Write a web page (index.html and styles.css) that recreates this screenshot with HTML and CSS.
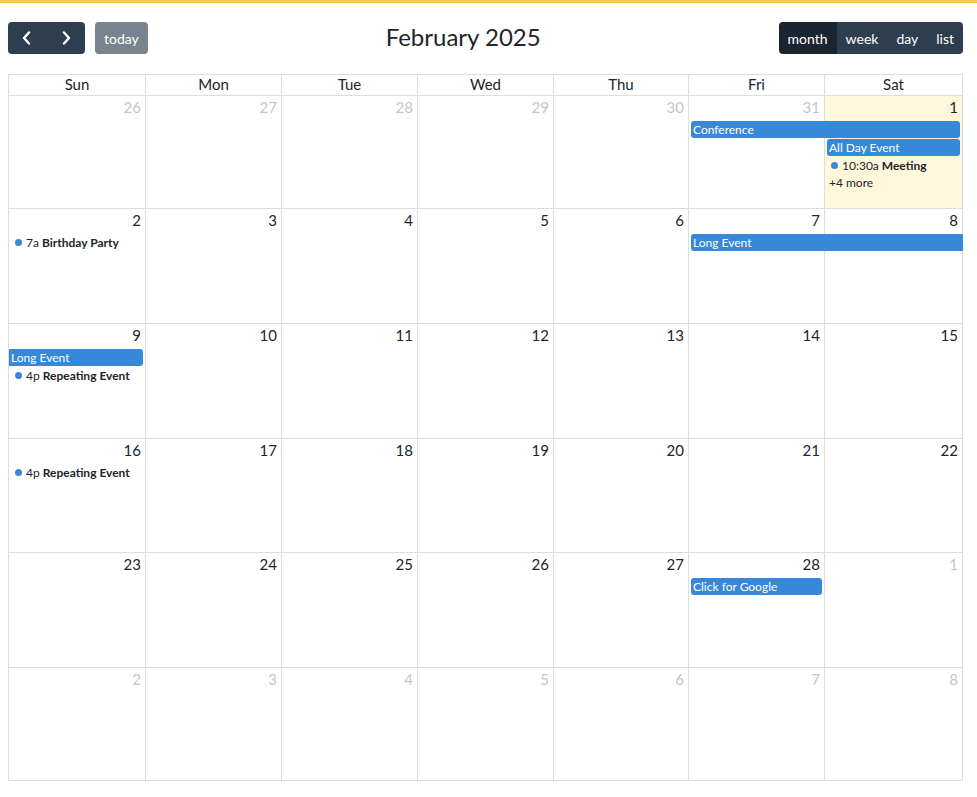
FILE: index.html
```html
<!DOCTYPE html>
<html lang="en">

<head>
	<meta charset="UTF-8">
	<title>Calendar - February 2025</title>

	<link rel="stylesheet" href="styles.css">
</head>

<body>
	<div class="topbar"></div>

	<div class="calendar">
		<div class="toolbar">
			<div class="toolbar-left">
				<div class="btn-group">
					<button class="btn btn-nav" title="Previous month">
						<svg width="14" height="14" viewBox="0 0 14 14"><polyline points="9,1.5 4,7 9,12.5" /></svg>
					</button>
					<button class="btn btn-nav" title="Next month">
						<svg width="14" height="14" viewBox="0 0 14 14"><polyline points="5,1.5 10,7 5,12.5" /></svg>
					</button>
				</div>
				<button class="btn btn-today">today</button>
			</div>
			<h2 class="title">February 2025</h2>
			<div class="btn-group">
				<button class="btn active">month</button>
				<button class="btn">week</button>
				<button class="btn">day</button>
				<button class="btn">list</button>
			</div>
		</div>

		<div class="month">
			<div class="dow-row">
				<div class="dow">Sun</div>
				<div class="dow">Mon</div>
				<div class="dow">Tue</div>
				<div class="dow">Wed</div>
				<div class="dow">Thu</div>
				<div class="dow">Fri</div>
				<div class="dow">Sat</div>
			</div>

			<div class="weeks">
				<!-- semana 1 -->
				<div class="week">
					<div class="day other"><span class="num">26</span></div>
					<div class="day other"><span class="num">27</span></div>
					<div class="day other"><span class="num">28</span></div>
					<div class="day other"><span class="num">29</span></div>
					<div class="day other"><span class="num">30</span></div>
					<div class="day other"><span class="num">31</span></div>
					<div class="day today"><span class="num">1</span></div>

					<div class="ev-bar at-fri span-2 line-1">Conference</div>
					<div class="ev-bar at-sat line-2">All Day Event</div>
					<div class="ev-dot at-sat line-3"><i class="dot"></i><span class="time">10:30a</span><b>Meeting</b></div>
					<div class="more at-sat line-4">+4 more</div>
				</div>

				<!-- semana 2 -->
				<div class="week">
					<div class="day"><span class="num">2</span></div>
					<div class="day"><span class="num">3</span></div>
					<div class="day"><span class="num">4</span></div>
					<div class="day"><span class="num">5</span></div>
					<div class="day"><span class="num">6</span></div>
					<div class="day"><span class="num">7</span></div>
					<div class="day"><span class="num">8</span></div>

					<div class="ev-dot at-sun line-1"><i class="dot"></i><span class="time">7a</span><b>Birthday Party</b></div>
					<div class="ev-bar at-fri span-2 line-1 cont-right">Long Event</div>
				</div>

				<!-- semana 3 -->
				<div class="week">
					<div class="day"><span class="num">9</span></div>
					<div class="day"><span class="num">10</span></div>
					<div class="day"><span class="num">11</span></div>
					<div class="day"><span class="num">12</span></div>
					<div class="day"><span class="num">13</span></div>
					<div class="day"><span class="num">14</span></div>
					<div class="day"><span class="num">15</span></div>

					<div class="ev-bar at-sun line-1 cont-left">Long Event</div>
					<div class="ev-dot at-sun line-2"><i class="dot"></i><span class="time">4p</span><b>Repeating Event</b></div>
				</div>

				<!-- semana 4 -->
				<div class="week">
					<div class="day"><span class="num">16</span></div>
					<div class="day"><span class="num">17</span></div>
					<div class="day"><span class="num">18</span></div>
					<div class="day"><span class="num">19</span></div>
					<div class="day"><span class="num">20</span></div>
					<div class="day"><span class="num">21</span></div>
					<div class="day"><span class="num">22</span></div>

					<div class="ev-dot at-sun line-1"><i class="dot"></i><span class="time">4p</span><b>Repeating Event</b></div>
				</div>

				<!-- semana 5 -->
				<div class="week">
					<div class="day"><span class="num">23</span></div>
					<div class="day"><span class="num">24</span></div>
					<div class="day"><span class="num">25</span></div>
					<div class="day"><span class="num">26</span></div>
					<div class="day"><span class="num">27</span></div>
					<div class="day"><span class="num">28</span></div>
					<div class="day other"><span class="num">1</span></div>

					<div class="ev-bar at-fri line-1">Click for Google</div>
				</div>

				<!-- semana 6 -->
				<div class="week">
					<div class="day other"><span class="num">2</span></div>
					<div class="day other"><span class="num">3</span></div>
					<div class="day other"><span class="num">4</span></div>
					<div class="day other"><span class="num">5</span></div>
					<div class="day other"><span class="num">6</span></div>
					<div class="day other"><span class="num">7</span></div>
					<div class="day other"><span class="num">8</span></div>
				</div>
			</div>
		</div>
	</div>
</body>

</html>
```

FILE: styles.css
```css
html {
	font-family: "Lato", "Open Sans", sans-serif;
	font-size: 15px;
}

body {
	margin: 0;
	color: #212529;
	background-color: #FFF;
}

.topbar {
	height: 3px;
	background-color: #F8C955;
}

.calendar {
	width: 955px;
	margin: 19px 8px 0;
}

/* barra de herramientas */
.toolbar {
	display: flex;
	justify-content: space-between;
	align-items: center;
	height: 32px;
	margin-bottom: 20px;
}

.toolbar-left {
	display: flex;
	gap: 10px;
}

.btn-group {
	display: flex;
}

.btn {
	height: 32px;
	padding: 0 9px;
	font: inherit;
	font-size: 14px;
	color: #FFF;
	background-color: #2C3E50;
	border: 0;
	border-radius: 0;
}

.btn-group .btn:first-child {
	border-radius: 4px 0 0 4px;
}

.btn-group .btn:last-child {
	border-radius: 0 4px 4px 0;
}

.btn.active {
	background-color: #1A252F;
}

.btn-nav {
	display: flex;
	align-items: center;
	justify-content: center;
	width: 38.5px;
	padding: 0;
}

.btn-nav svg polyline {
	fill: none;
	stroke: #FFF;
	stroke-width: 2.4;
	stroke-linecap: round;
	stroke-linejoin: round;
}

.btn-today {
	padding: 0 9px;
	border-radius: 4px;
	background-color: #78838F;
}

.title {
	margin: 0 0 4px;
	font-size: 24px;
	font-weight: 400;
}

/* cuadricula del mes */
.month {
	border-top: 1px solid #DDD;
	border-left: 1px solid #DDD;
}

.dow-row,
.week {
	display: grid;
	grid-template-columns: 137px 136px 136px 136px 135px 136px 138px;
}

.dow {
	height: 20px;
	line-height: 19px;
	text-align: center;
	border-right: 1px solid #DDD;
	border-bottom: 1px solid #DDD;
}

.weeks {
	display: grid;
	grid-template-rows: 113px 115px 115px 114px 115px 113px;
}

.week {
	grid-template-rows: 25px repeat(4, 18px) 1fr;
}

.day {
	grid-row: 1 / -1;
	padding: 2px 4px 0;
	text-align: right;
	line-height: 18px;
	border-right: 1px solid #DDD;
	border-bottom: 1px solid #DDD;
}

.day:nth-child(1) { grid-column: 1; }
.day:nth-child(2) { grid-column: 2; }
.day:nth-child(3) { grid-column: 3; }
.day:nth-child(4) { grid-column: 4; }
.day:nth-child(5) { grid-column: 5; }
.day:nth-child(6) { grid-column: 6; }
.day:nth-child(7) { grid-column: 7; }

.day.other .num {
	color: #C4C5C6;
}

.day.today {
	background-color: #FEF7DC;
}

/* eventos */
.at-sun { grid-column: 1; }
.at-fri { grid-column: 6; }
.at-sat { grid-column: 7; }
.span-2 { grid-column-end: span 2; }

.line-1 { grid-row: 2; }
.line-2 { grid-row: 3; }
.line-3 { grid-row: 4; }
.line-4 { grid-row: 5; }

.ev-bar {
	align-self: start;
	height: 17px;
	margin: 0 3px 0 2px;
	padding: 0 2px;
	font-size: 12px;
	line-height: 17px;
	color: #FFF;
	white-space: nowrap;
	overflow: hidden;
	background-color: #3788D8;
	border-radius: 3px;
}

.ev-bar.cont-right {
	margin-right: 0;
	border-top-right-radius: 0;
	border-bottom-right-radius: 0;
}

.ev-bar.cont-left {
	margin-left: 0;
	border-top-left-radius: 0;
	border-bottom-left-radius: 0;
}

.ev-dot {
	display: flex;
	align-items: center;
	align-self: start;
	height: 16px;
	padding: 0 2px;
	font-size: 12px;
	white-space: nowrap;
}

.dot {
	width: 7px;
	height: 7px;
	margin: 0 4px;
	border-radius: 50%;
	background-color: #3788D8;
}

.time {
	margin-right: 3px;
}

.ev-dot b {
	font-weight: 700;
}

.more {
	padding: 0 4px;
	font-size: 12px;
	line-height: 15px;
}
```
